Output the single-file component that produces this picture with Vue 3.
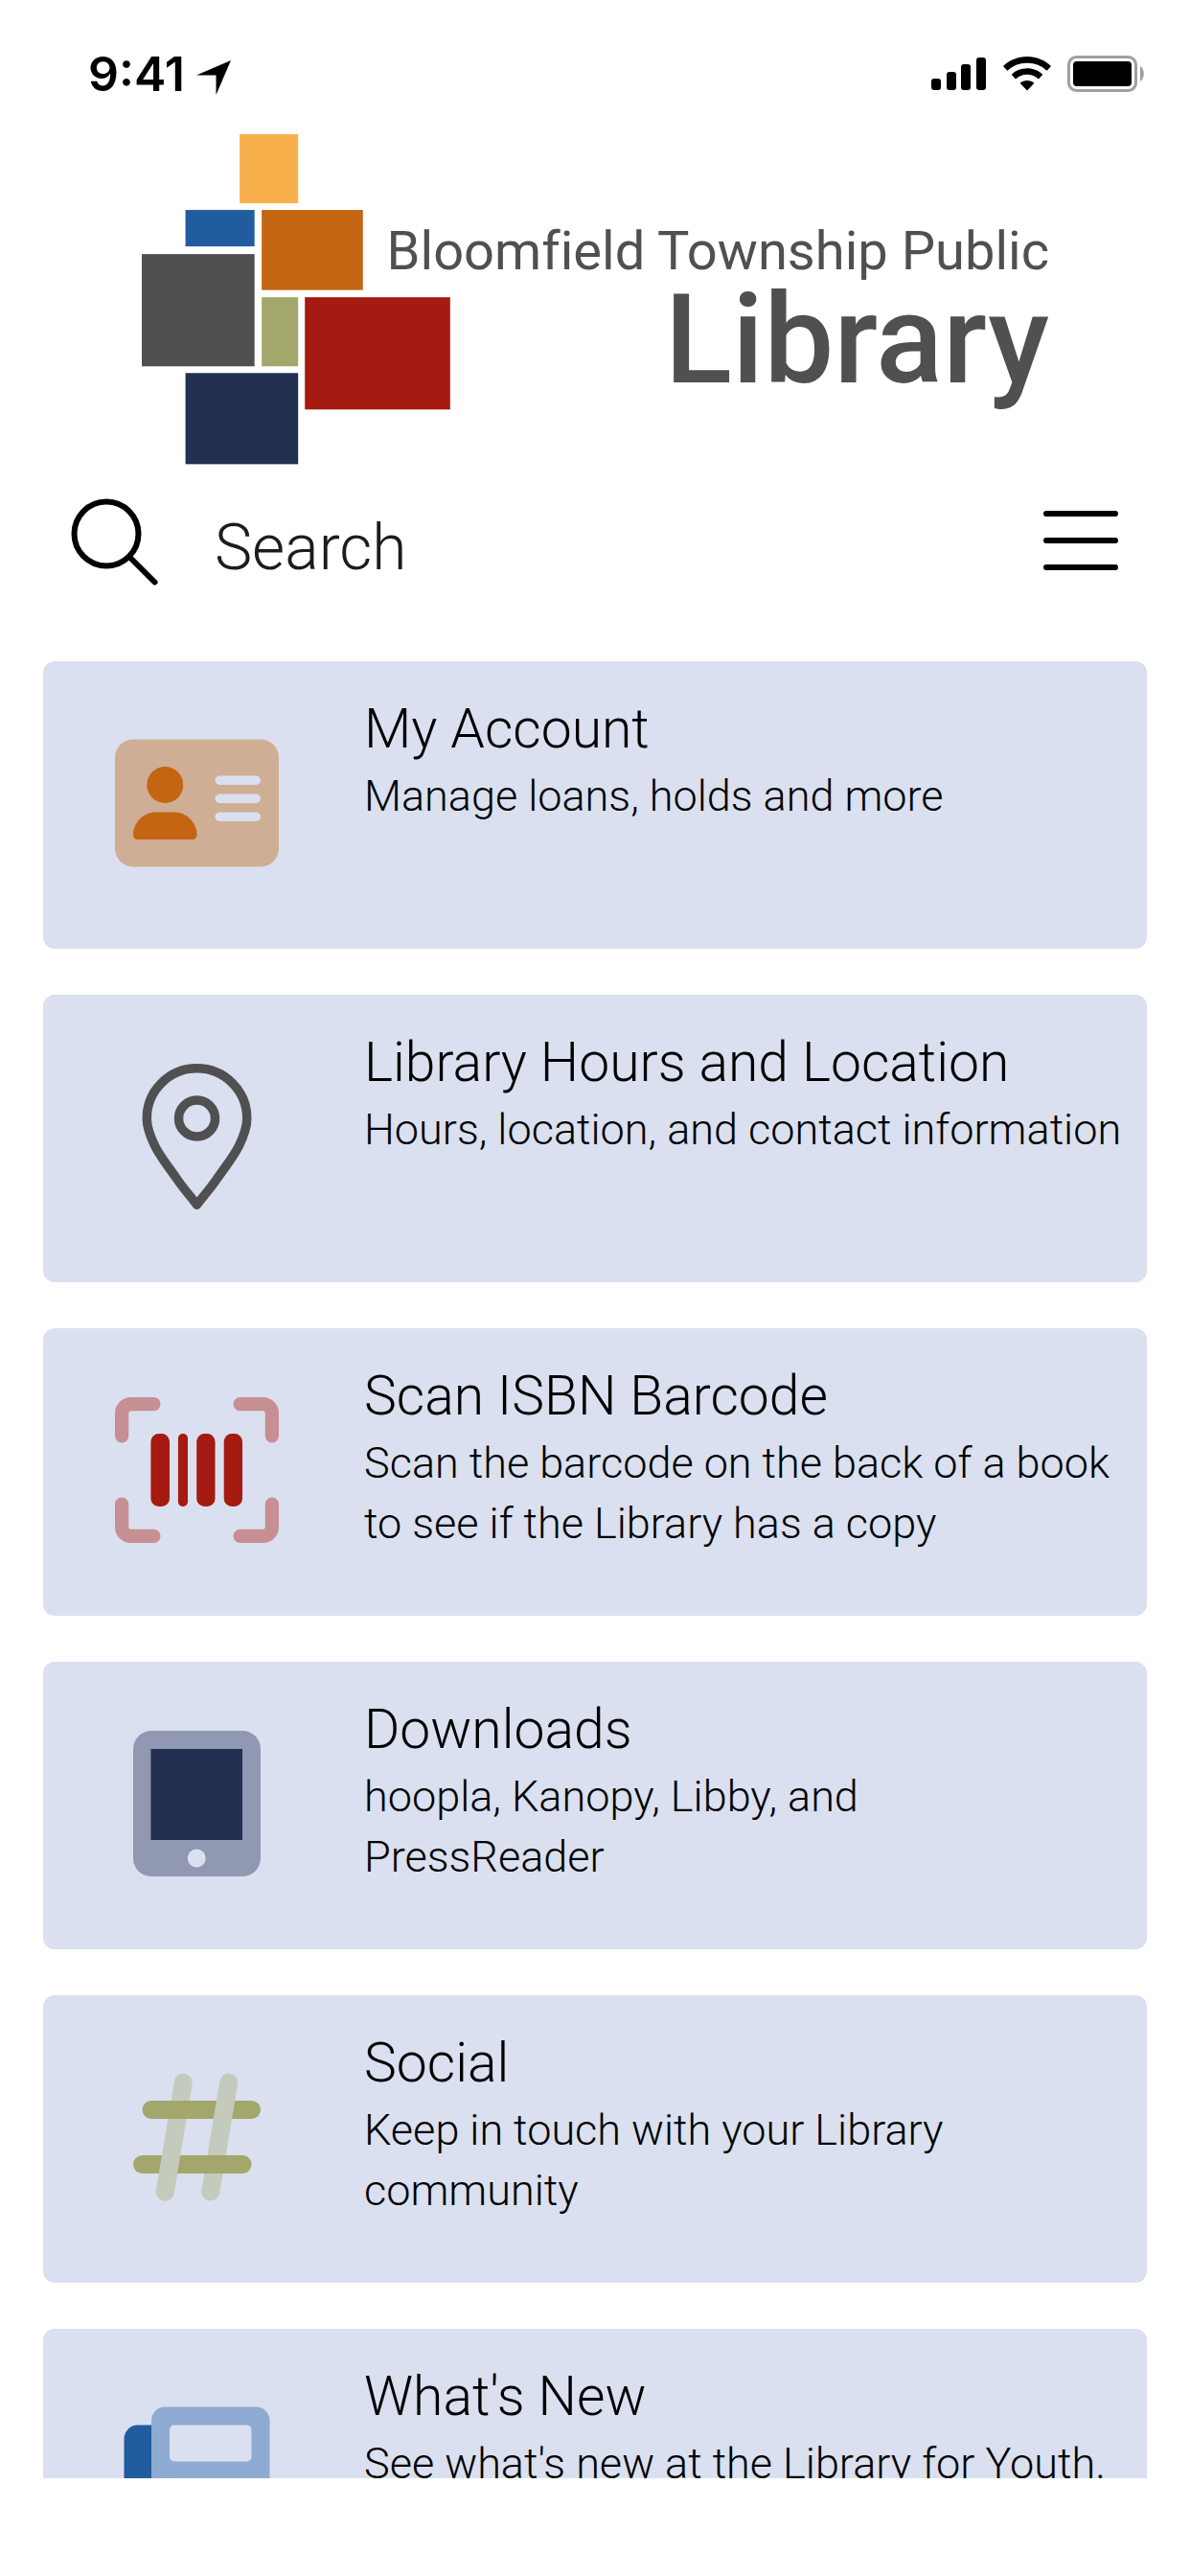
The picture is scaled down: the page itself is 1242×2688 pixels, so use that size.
<script setup>
import { ref } from 'vue'

const query = ref('')

const cards = [
  { id: 'account', title: 'My Account', text: 'Manage loans, holds and more' },
  { id: 'hours', title: 'Library Hours and Location', text: 'Hours, location, and contact information' },
  { id: 'scan', title: 'Scan ISBN Barcode', text: 'Scan the barcode on the back of a book to see if the Library has a copy' },
  { id: 'downloads', title: 'Downloads', text: 'hoopla, Kanopy, Libby, and\nPressReader' },
  { id: 'social', title: 'Social', text: 'Keep in touch with your Library community' },
  { id: 'news', title: "What's New", text: "See what's new at the Library for Youth." },
]
</script>

<template>
  <div class="app">
    <div class="status">
      <div class="status-left">
        <span class="time">9:41</span>
        <svg class="arrow" viewBox="0 0 36 36" aria-hidden="true">
          <path d="M36 0 0 15.500h20.500V36z" />
        </svg>
      </div>
      <div class="status-right">
        <svg width="58" height="36" viewBox="0 0 58 36" aria-hidden="true">
          <rect x="0" y="23" width="10" height="12" rx="3" />
          <rect x="16" y="16" width="10" height="19" rx="3" />
          <rect x="31" y="8" width="10" height="27" rx="3" />
          <rect x="47" y="1" width="10" height="34" rx="3" />
        </svg>
        <svg width="50" height="36" viewBox="0 0 50 36" aria-hidden="true">
          <path d="M25 0C34.700 0 43.500 3.800 50 10l-4.300 4.700A30 30 0 0 0 25 6.700 30 30 0 0 0 4.300 14.700L0 10C6.500 3.800 15.300 0 25 0z" />
          <path d="M25 12.300c6.300 0 12 2.400 16.300 6.400L37 23.400a17.500 17.500 0 0 0-24 0l-4.300-4.700A24 24 0 0 1 25 12.300z" />
          <path d="M25 25c2.800 0 5.400 1 7.400 2.700L25 35.500l-7.400-7.800C19.600 26 22.200 25 25 25z" />
        </svg>
        <svg width="80" height="38" viewBox="0 0 80 38" aria-hidden="true">
          <rect x="1.500" y="1.500" width="70" height="35" rx="8" fill="none" stroke="#a0a0a0" stroke-width="3" />
          <rect x="6" y="6" width="61" height="26" rx="4" />
          <path d="M76 11c5 3 5 13 0 16z" fill="#a0a0a0" />
        </svg>
      </div>
    </div>

    <header class="header">
      <svg class="logo" viewBox="0 0 945 345" role="img" aria-label="Bloomfield Township Public Library">
        <rect x="102" y="0" width="61" height="72" fill="#f8b04c" />
        <rect x="45.500" y="79" width="72" height="38" fill="#215c9f" />
        <rect x="125" y="79" width="105.500" height="83.500" fill="#c46512" />
        <rect x="0" y="125" width="117.500" height="117" fill="#505050" />
        <rect x="125" y="170" width="38" height="72" fill="#a3a76b" />
        <rect x="170" y="170" width="151.500" height="117" fill="#a51a11" />
        <rect x="45.500" y="249" width="117.500" height="95" fill="#233052" />
        <text class="logo-top" x="946" y="141" text-anchor="end">Bloomfield Township Public</text>
        <text class="logo-main" x="946" y="259" text-anchor="end">Library</text>
      </svg>
    </header>

    <form class="search" role="search" @submit.prevent>
      <button class="icon-button" type="submit" aria-label="Search">
        <svg width="92" height="92" viewBox="0 0 92 92" fill="none" stroke="#000" stroke-width="6" stroke-linecap="round" aria-hidden="true">
          <circle cx="37" cy="37" r="33.500" />
          <path d="M61 61 87.500 87.500" />
        </svg>
      </button>
      <input v-model="query" class="search-input" type="text" placeholder="Search" aria-label="Search the library" />
      <button class="icon-button menu-button" type="button" aria-label="Menu">
        <svg width="80" height="64" viewBox="0 0 80 64" stroke="#000" stroke-width="6" stroke-linecap="round" aria-hidden="true">
          <path d="M4 4h72M4 32h72M4 60h72" />
        </svg>
      </button>
    </form>

    <main class="list">
      <a v-for="card in cards" :key="card.id" class="card" href="#">
        <svg class="card-icon" viewBox="0 0 576 512" aria-hidden="true">
          <g v-if="card.id === 'account'">
            <rect y="32" width="576" height="448" rx="64" fill="#cfae96" />
            <circle cx="176" cy="192" r="64" fill="#c46512" />
            <path d="M64 368c0-44 36-80 80-80h64c44 0 80 36 80 80 0 9-7 16-16 16H80c-9 0-16-7-16-16z" fill="#c46512" />
            <g fill="#dae0ef">
              <rect x="352" y="160" width="160" height="32" rx="16" />
              <rect x="352" y="224" width="160" height="32" rx="16" />
              <rect x="352" y="288" width="160" height="32" rx="16" />
            </g>
          </g>
          <g v-else-if="card.id === 'hours'" fill="none" stroke="#505050" stroke-width="32" stroke-linejoin="round">
            <path d="M288 496C264 464 240 438 217 404 190 364 161 330 141 290 121 250 112 214 112 192a176 176 0 0 1 352 0c0 22-9 58-29 98-20 40-49 74-76 114-23 34-47 60-71 92z" />
            <circle cx="288" cy="192" r="64" />
          </g>
          <g v-else-if="card.id === 'scan'">
            <path d="M24 136V56a32 32 0 0 1 32-32h80M440 24h80a32 32 0 0 1 32 32v80M552 376v80a32 32 0 0 1-32 32h-80M136 488H56a32 32 0 0 1-32-32v-80" fill="none" stroke="#c68f93" stroke-width="48" stroke-linecap="round" />
            <g fill="#a51a11">
              <rect x="126" y="128" width="66" height="256" rx="28" />
              <rect x="222" y="128" width="34" height="256" rx="16" />
              <rect x="287" y="128" width="65" height="256" rx="28" />
              <rect x="383" y="128" width="65" height="256" rx="28" />
            </g>
          </g>
          <g v-else-if="card.id === 'downloads'">
            <rect x="64" width="448" height="512" rx="64" fill="#9099b1" />
            <rect x="126" y="64" width="322" height="320" fill="#233052" />
            <circle cx="287" cy="448" r="32" fill="#dae0ef" />
          </g>
          <g v-else-if="card.id === 'social'" fill="none" stroke-width="64" stroke-linecap="round">
            <path d="M240 64 176 448" stroke="#c4cbbd" />
            <path d="M128 160h352" stroke="#a3a76b" />
            <path d="M400 64 336 448" stroke="#c4cbbd" />
            <path d="M96 352h352" stroke="#a3a76b" />
            <path d="M197.300 320 176 448" stroke="#c4cbbd" />
          </g>
          <g v-else>
            <path d="M128 96H80a48 48 0 0 0-48 48v256a80 80 0 0 0 80 80h16z" fill="#215c9f" />
            <rect x="128" y="32" width="416" height="448" rx="48" fill="#90abd1" />
            <path d="M128 80v400h60V80z" fill="#90abd1" />
            <rect x="192" y="96" width="288" height="128" rx="16" fill="#dae0ef" />
          </g>
        </svg>
        <div class="card-body">
          <h2 class="card-title">{{ card.title }}</h2>
          <p class="card-text">{{ card.text }}</p>
        </div>
      </a>
    </main>
  </div>
</template>

<style>
body {
  margin: 0;
  background: #fff;
}
</style>

<style scoped>
.app {
  box-sizing: border-box;
  display: flex;
  flex-direction: column;
  height: 100vh;
  padding-bottom: 102px;
  overflow: hidden;
  background: #fff;
  color: #000;
  font-family: Roboto, "Liberation Sans", sans-serif;
  font-weight: 300;
}
.status {
  flex: none;
  display: flex;
  justify-content: space-between;
  align-items: center;
  height: 140px;
  padding: 14px 48px 0 92px;
  box-sizing: border-box;
}
.status-left {
  display: flex;
  align-items: center;
  gap: 12px;
}
.time {
  font-family: Inter, "Liberation Sans", sans-serif;
  font-size: 50px;
  line-height: 60px;
  font-weight: 600;
}
.arrow {
  width: 36px;
  height: 36px;
  margin-top: 8px;
}
.status-right {
  display: flex;
  align-items: center;
  gap: 17px;
}
.header {
  flex: none;
  display: flex;
  padding: 0 148px;
}
.logo {
  display: block;
  width: 100%;
}
.logo text {
  fill: #505050;
  font-variant-ligatures: none;
}
.logo-top {
  font-size: 56px;
  font-weight: 400;
}
.logo-main {
  font-size: 130px;
  font-weight: 500;
}
.search {
  flex: none;
  display: flex;
  align-items: center;
  height: 205px;
  padding: 0 74px;
  padding-bottom: 44px;
  box-sizing: border-box;
}
.icon-button {
  flex: none;
  display: flex;
  padding: 0;
  border: 0;
  background: none;
}
.menu-button {
  margin-bottom: 4px;
}
.search-input {
  flex: 1;
  min-width: 0;
  height: 88px;
  margin: 12px 24px 0 58px;
  padding: 0;
  border: 0;
  outline: 0;
  background: none;
  color: #1c1c1c;
  font: inherit;
  font-size: 66px;
}
.search-input::placeholder {
  color: #1c1c1c;
  opacity: 1;
}
.list {
  flex: 1;
  min-height: 0;
  overflow: hidden;
  display: flex;
  flex-direction: column;
  gap: 48px;
  padding: 0 45px;
}
.card {
  flex: none;
  display: flex;
  align-items: flex-start;
  gap: 89px;
  min-height: 300px;
  padding: 32px 24px 32px 75px;
  box-sizing: border-box;
  border-radius: 12px;
  background: #dae0ef;
  color: inherit;
  text-decoration: none;
}
.card-icon {
  flex: none;
  width: 171px;
  height: 152px;
  margin-top: 40px;
}
.card-body {
  flex: 1;
  min-width: 0;
}
.card-title,
.card-text {
  margin: 0;
  font-weight: 300;
}
.card-title {
  font-size: 57px;
  line-height: 77px;
}
.card-text {
  font-size: 45px;
  line-height: 63px;
  white-space: pre-line;
}
</style>
